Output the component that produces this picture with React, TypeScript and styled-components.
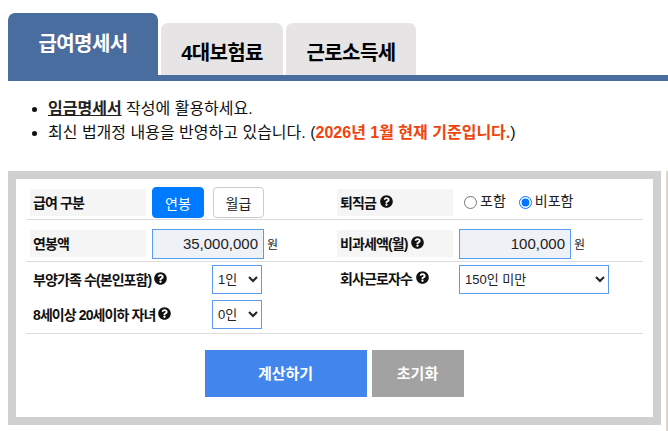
import React from "react"
import styled, { createGlobalStyle } from "styled-components"
import { FaQuestionCircle } from "react-icons/fa"

const GlobalStyle = createGlobalStyle`
  body {
    margin: 0;
    background: #fff;
    color: #111;
    font-family: "Liberation Sans", "Noto Sans CJK KR", sans-serif;
  }
`

const Page = styled.div`
  width: 668px;
  height: 431px;
  overflow: hidden;
`

const TabBar = styled.nav`
  display: flex;
  align-items: flex-end;
  gap: 3px;
  height: 62px;
  margin: 13px 0 0 8px;
  border-bottom: 6px solid #4a6d9f;
`

const Tab = styled.div<{ $active?: boolean; $width: number }>`
  width: ${(p) => p.$width}px;
  height: ${(p) => (p.$active ? 62 : 52)}px;
  box-sizing: border-box;
  padding-top: ${(p) => (p.$active ? 16 : 15)}px;
  border-radius: 7px 7px 0 0;
  background: ${(p) => (p.$active ? "#4a6d9f" : "#e6e4e5")};
  color: ${(p) => (p.$active ? "#fff" : "#000")};
  font-size: 20px;
  font-weight: 700;
  line-height: 30px;
  letter-spacing: -0.6px;
  text-align: center;
`

const Notes = styled.ul`
  margin: 16px 0 0;
  padding: 0 0 0 48px;
  font-size: 16px;
  line-height: 24px;
`

const NoteLink = styled.span`
  font-weight: 700;
  text-decoration: underline;
  color: #222;
`

const Accent = styled.strong`
  color: #f0440c;
`

const Content = styled.div`
  display: flex;
  align-items: flex-start;
  gap: 5px;
  height: 260px;
  margin: 26px 0 0 8px;
`

const SideRule = styled.div`
  flex: none;
  width: 2px;
  align-self: stretch;
  background: #dcd6d0;
`

const Panel = styled.section`
  flex: none;
  width: 617px;
  height: 238px;
  padding: 0 10px;
  border: 8px solid #d0d0d0;
`

const Row = styled.div<{ $height: number }>`
  display: grid;
  grid-template-columns: 307px 1fr;
  height: ${(p) => p.$height}px;
  box-sizing: border-box;
  border-bottom: 1px solid #dcdcdc;
`

const Column = styled.div`
  display: flex;
  flex-direction: column;
  justify-content: flex-start;
`

const Field = styled.div<{ $top?: number; $alignTop?: boolean }>`
  display: flex;
  align-items: ${(p) => (p.$alignTop ? "flex-start" : "center")};
  padding: ${(p) => p.$top ?? 0}px 0 0 4px;
`

const Label = styled.div<{ $shaded?: boolean; $width?: number; $gap?: number }>`
  display: flex;
  align-items: center;
  gap: ${(p) => p.$gap ?? 4}px;
  width: ${(p) => p.$width ?? 116}px;
  height: 27px;
  padding: 0 0 2px 3px;
  box-sizing: border-box;
  flex: none;
  background: ${(p) => (p.$shaded ? "#f5f5f5" : "transparent")};
  color: #111;
  font-size: 14px;
  font-weight: 700;
  letter-spacing: -0.9px;
  white-space: nowrap;
`

const Toggle = styled.button<{ $active?: boolean; $width: number }>`
  width: ${(p) => p.$width}px;
  height: 31px;
  margin-left: ${(p) => (p.$active ? 6 : 9)}px;
  padding: 0;
  border: 1px solid ${(p) => (p.$active ? "#007bff" : "#ccc")};
  border-radius: 4px;
  background: ${(p) => (p.$active ? "#007bff" : "#fff")};
  color: ${(p) => (p.$active ? "#fff" : "#222")};
  font-family: inherit;
  font-size: 14px;
`

const Amount = styled.input`
  width: 112px;
  height: 30px;
  margin-left: 6px;
  padding: 0 5px 0 0;
  box-sizing: border-box;
  border: 1px solid #5a9bf0;
  background: #eef1f6;
  color: #222;
  font-family: inherit;
  font-size: 15px;
  text-align: right;
`

const Unit = styled.span`
  margin-left: 3px;
  color: #222;
  font-size: 12px;
`

const Dropdown = styled.select<{ $width: number; $offset: number }>`
  width: ${(p) => p.$width}px;
  height: 29px;
  margin-left: ${(p) => p.$offset}px;
  padding: 0 0 0 1px;
  box-sizing: border-box;
  border: 1px solid #5a9bf0;
  border-radius: 0;
  background: #fff;
  color: #222;
  font-family: inherit;
  font-size: 13px;
`

const RadioGroup = styled.label`
  display: flex;
  align-items: center;
  padding-bottom: 5px;
  color: #222;
  font-size: 14px;
  margin-left: 11px;
  & + & {
    margin-left: 13px;
  }
  input {
    width: 13px;
    height: 13px;
    margin: 5px 3px 0 0;
  }
`

const Actions = styled.div`
  display: flex;
  justify-content: center;
  gap: 5px;
  margin-top: 16px;
  padding-right: 1px;
`

const ActionButton = styled.button<{ $color: string; $width: number }>`
  width: ${(p) => p.$width}px;
  height: 47px;
  padding: 0 0 3px;
  border: 0;
  background: ${(p) => p.$color};
  color: #fff;
  font-family: inherit;
  font-size: 15px;
  font-weight: 700;
`

const Help = () => <FaQuestionCircle size={13} color="#111" />

export default function App() {
  return (
    <Page>
      <GlobalStyle />
      <TabBar>
        <Tab $active $width={150}>급여명세서</Tab>
        <Tab $width={122}>4대보험료</Tab>
        <Tab $width={130}>근로소득세</Tab>
      </TabBar>

      <Notes>
        <li><NoteLink>임금명세서</NoteLink> 작성에 활용하세요.</li>
        <li>
          최신 법개정 내용을 반영하고 있습니다. (<Accent>2026년 1월 현재 기준입니다.</Accent>)
        </li>
      </Notes>

      <Content>
        <Panel>
          <Row $height={41}>
            <Field $top={7}>
              <Label $shaded>급여 구분</Label>
              <Toggle $active $width={52}>연봉</Toggle>
              <Toggle $width={51}>월급</Toggle>
            </Field>
            <Field $top={7}>
              <Label $shaded>퇴직금 <Help /></Label>
              <RadioGroup><input type="radio" name="severance" />포함</RadioGroup>
              <RadioGroup><input type="radio" name="severance" defaultChecked />비포함</RadioGroup>
            </Field>
          </Row>
          <Row $height={42}>
            <Field $top={6}>
              <Label $shaded>연봉액</Label>
              <Amount defaultValue="35,000,000" />
              <Unit>원</Unit>
            </Field>
            <Field $top={6}>
              <Label $shaded>비과세액(월) <Help /></Label>
              <Amount defaultValue="100,000" />
              <Unit>원</Unit>
            </Field>
          </Row>
          <Row $height={72}>
            <Column>
              <Field $top={3}>
                <Label $width={176} $gap={3}>부양가족 수(본인포함) <Help /></Label>
                <Dropdown $width={50} $offset={6}><option>1인</option></Dropdown>
              </Field>
              <Field $top={6}>
                <Label $width={176} $gap={3}>8세이상 20세이하 자녀 <Help /></Label>
                <Dropdown $width={50} $offset={6}><option>0인</option></Dropdown>
              </Field>
            </Column>
            <Field $top={3} $alignTop>
              <Label>회사근로자수 <Help /></Label>
              <Dropdown $width={150} $offset={6}><option>150인 미만</option></Dropdown>
            </Field>
          </Row>
          <Actions>
            <ActionButton $color="#4285ec" $width={162}>계산하기</ActionButton>
            <ActionButton $color="#a2a2a2" $width={92}>초기화</ActionButton>
          </Actions>
        </Panel>
        <SideRule />
      </Content>
    </Page>
  )
}
